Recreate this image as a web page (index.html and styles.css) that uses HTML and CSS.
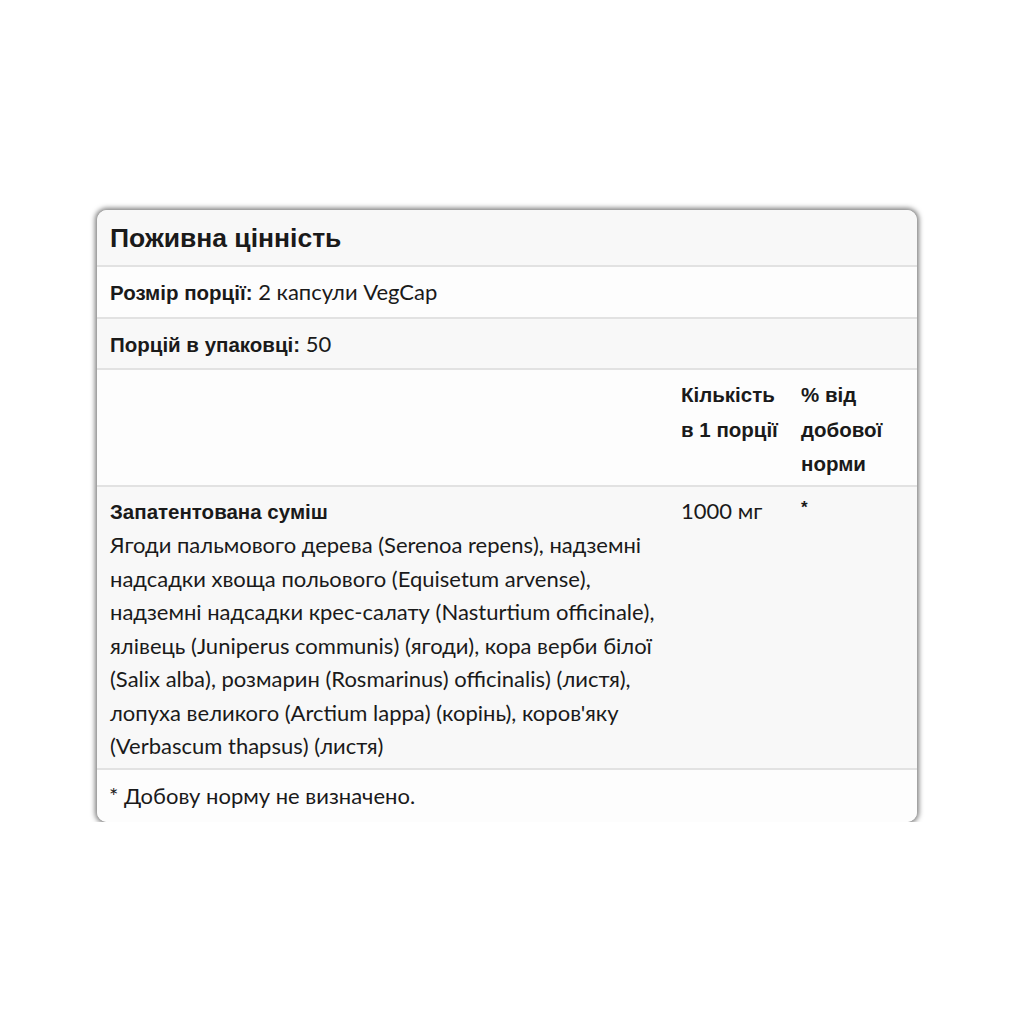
FILE: index.html
```html
<!DOCTYPE html>
<html lang="uk">
<head>
    <meta charset="UTF-8">
    <title>Поживна цінність</title>
    <link rel="stylesheet" href="styles.css">
</head>
<body>
    <div class="facts-card">
        <table class="facts">
            <colgroup>
                <col class="col-name">
                <col class="col-amount">
                <col class="col-dv">
            </colgroup>
            <tr class="row-shade">
                <td colspan="3" class="title">Поживна цінність</td>
            </tr>
            <tr class="row-plain">
                <td colspan="3"><b>Розмір порції:</b> 2 капсули VegCap</td>
            </tr>
            <tr class="row-shade">
                <td colspan="3"><b>Порцій в упаковці:</b> 50</td>
            </tr>
            <tr class="row-plain head">
                <td></td>
                <td><b>Кількість в&nbsp;1&nbsp;порції</b></td>
                <td><b>% від добової норми</b></td>
            </tr>
            <tr class="row-shade mix">
                <td>
                    <b>Запатентована суміш</b><br>
                    Ягоди пальмового дерева (Serenoa repens), надземні надсадки хвоща польового (Equisetum arvense), надземні надсадки крес-салату (Nasturtium officinale), ялівець (Juniperus communis) (ягоди), кора верби білої (Salix alba), розмарин (Rosmarinus) officinalis) (листя), лопуха великого (Arctium lappa) (корінь), коров'яку (Verbascum thapsus) (листя)
                </td>
                <td>1000 мг</td>
                <td class="star">*</td>
            </tr>
            <tr class="row-plain">
                <td colspan="3" class="note">* Добову норму не визначено.</td>
            </tr>
        </table>
    </div>
</body>
</html>
```

FILE: styles.css
```css
body {
    margin: 0;
    background: #fff;
    font-family: Lato, "Open Sans", sans-serif;
    color: #1a1a1a;
}

.facts-card {
    width: 820px;
    margin: 210px 0 0 97px;
    border-radius: 10px;
    overflow: hidden;
    box-shadow: 0 0 5px 2px rgba(0, 0, 0, 0.5);
    background: #fdfdfd;
}

.facts {
    width: 100%;
    border-collapse: collapse;
    table-layout: fixed;
    font-size: 22px;
    line-height: 33.5px;
}

.col-name { width: 571px; }
.col-amount { width: 120px; }

.facts td {
    padding: 8px 6px 7px 13px;
    vertical-align: top;
    border-top: 2px solid #e2e2e2;
}

.facts tr:first-child td {
    border-top: none;
}

.facts b {
    font-family: "Liberation Sans", Arial, sans-serif;
    font-weight: bold;
    font-size: 20.5px;
}

.row-shade {
    background: #f8f8f8;
}

.row-plain {
    background: #fdfdfd;
}

.facts .title {
    font-family: "Liberation Sans", Arial, sans-serif;
    font-weight: bold;
    font-size: 26.5px;
    line-height: 40px;
    padding-top: 8px;
    padding-bottom: 7px;
}

.head td {
    padding-top: 7px;
    padding-bottom: 4px;
}

.mix td {
    padding-top: 7px;
    padding-bottom: 5px;
}

.star {
    font-family: "Liberation Sans", Arial, sans-serif;
    font-weight: bold;
    font-size: 17px;
    line-height: 28px;
}

.facts .note {
    padding: 9px 6px 10px 12px;
}
```
